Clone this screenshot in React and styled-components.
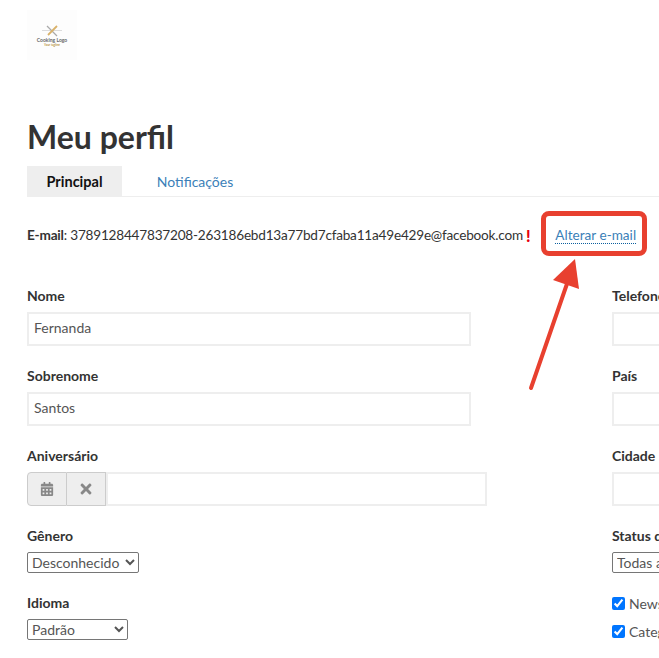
import React from 'react'
import styled, { createGlobalStyle } from 'styled-components'
import { FaCalendarAlt, FaTimes } from 'react-icons/fa'

const GlobalStyle = createGlobalStyle`
  html, body {
    margin: 0;
    padding: 0;
    background: #fff;
    overflow: hidden;
  }
  body {
    font-family: "Lato", "Open Sans", sans-serif;
    color: #333;
  }
`

const Page = styled.div`
  position: relative;
  width: 659px;
  height: 658px;
  overflow: hidden;
  padding: 10px 0 0 27px;
  box-sizing: border-box;
`

const LogoBox = styled.div`
  width: 50px;
  height: 50px;
  background: #fdfdfd;
  display: flex;
  flex-direction: column;
  align-items: center;
  padding-top: 15px;
  box-sizing: border-box;
`

const LogoName = styled.span`
  font-size: 5px;
  line-height: 6px;
  font-weight: 700;
  color: #666;
  white-space: nowrap;
`

const LogoTag = styled.span`
  font-size: 3px;
  line-height: 4px;
  font-weight: 700;
  color: #b8923f;
  white-space: nowrap;
`

const Title = styled.h1`
  margin: 54px 0 0;
  font-size: 32px;
  line-height: 46px;
  font-weight: 700;
  color: #333;
`

const Tabs = styled.div`
  display: flex;
  margin-top: 6px;
  height: 31px;
  width: 700px;
  border-bottom: 1px solid #eee;
  box-sizing: border-box;
`

const Tab = styled.div`
  width: ${p => p.$width}px;
  display: flex;
  align-items: center;
  justify-content: center;
  font-size: ${p => (p.$active ? 14.5 : 14)}px;
  font-weight: ${p => (p.$active ? 700 : 400)};
  color: ${p => (p.$active ? '#111' : '#3b7fb8')};
  background: ${p => (p.$active ? '#eee' : 'transparent')};
`

const EmailRow = styled.div`
  display: flex;
  align-items: center;
  height: 20px;
  margin-top: 28px;
  font-size: 13.6px;
  letter-spacing: -0.21px;
  color: #333;
  white-space: nowrap;
`

const Warn = styled.span`
  color: #e8000b;
  font-weight: 900;
  font-size: 16px;
  margin-left: 3px;
`

const ChangeLink = styled.a`
  margin-left: 25px;
  font-size: 13.6px;
  letter-spacing: 0;
  color: #3b7fb8;
  border-bottom: 1px dotted #0b5f9e;
  line-height: 16px;
`

const FormGrid = styled.div`
  display: grid;
  grid-template-columns: 585px 300px;
  margin-top: 43px;
`

const Column = styled.div`
  display: flex;
  flex-direction: column;
`

const Field = styled.div`
  display: flex;
  flex-direction: column;
  margin-bottom: ${p => p.$gap}px;
`

const Label = styled.label`
  font-size: 14px;
  line-height: 16px;
  font-weight: 700;
  color: #333;
  margin-bottom: 8px;
`

const TextInput = styled.input`
  width: ${p => p.$width}px;
  height: 34px;
  box-sizing: border-box;
  border: 2px solid #eee;
  padding: 0 5px 4px;
  font-family: inherit;
  font-size: 14px;
  color: #555;
  outline: none;
`

const DateGroup = styled.div`
  display: flex;
  width: 460px;
  height: 34px;
`

const DateButton = styled.button`
  width: ${p => p.$width}px;
  flex: none;
  display: flex;
  align-items: center;
  justify-content: center;
  padding: 0;
  background: #eee;
  color: #888;
  font-size: ${p => p.$icon}px;
  border: 1px solid #ccc;
  border-left-width: ${p => (p.$first ? 1 : 0)}px;
  border-radius: ${p => (p.$first ? '4px 0 0 4px' : '0')};
`

const DateInput = styled.input`
  flex: 1;
  min-width: 0;
  box-sizing: border-box;
  border: 2px solid #eee;
  outline: none;
`

const Select = styled.select`
  width: ${p => p.$width}px;
  height: 21px;
  box-sizing: border-box;
  font-family: inherit;
  font-size: 14px;
  color: #555;
  background: #fff;
  border: 1px solid #767676;
  border-radius: 2px;
  padding: 0 0 2px;
`

const CheckRow = styled.label`
  display: flex;
  align-items: center;
  gap: 4px;
  height: 16px;
  margin-bottom: 12px;
  font-size: 14px;
  color: #555;
  white-space: nowrap;
`

const Check = styled.input`
  width: 13px;
  height: 13px;
  margin: 0;
`

const Highlight = styled.div`
  position: absolute;
  left: 541px;
  top: 211px;
  width: 106px;
  height: 45px;
  box-sizing: border-box;
  border: 5px solid #e8402f;
  border-radius: 8px;
`

const Arrow = styled.svg`
  position: absolute;
  left: 520px;
  top: 250px;
`

function Logo() {
  return (
    <LogoBox>
      <svg width="22" height="12" viewBox="0 0 22 12">
        <path d="M1 5.5h20" stroke="#bbb" strokeWidth="0.5" />
        <path d="M6 1l10 10" stroke="#aaa" strokeWidth="1.3" />
        <path d="M16 1L7 10" stroke="#d9b26a" strokeWidth="1.8" />
      </svg>
      <LogoName>Cooking Logo</LogoName>
      <LogoTag>Your tagline</LogoTag>
    </LogoBox>
  )
}

export default function App() {
  return (
    <Page>
      <GlobalStyle />
      <Logo />
      <Title>Meu perfil</Title>
      <Tabs>
        <Tab $active $width={95}>Principal</Tab>
        <Tab $width={146}>Notificações</Tab>
      </Tabs>
      <EmailRow>
        <b>E-mail</b>: 3789128447837208-263186ebd13a77bd7cfaba11a49e429e@facebook.com
        <Warn>!</Warn>
        <ChangeLink>Alterar e-mail</ChangeLink>
      </EmailRow>
      <FormGrid>
        <Column>
          <Field $gap={22}>
            <Label>Nome</Label>
            <TextInput $width={444} defaultValue="Fernanda" />
          </Field>
          <Field $gap={22}>
            <Label>Sobrenome</Label>
            <TextInput $width={444} defaultValue="Santos" />
          </Field>
          <Field $gap={22}>
            <Label>Aniversário</Label>
            <DateGroup>
              <DateButton $first $width={40} $icon={14}><FaCalendarAlt /></DateButton>
              <DateButton $width={39} $icon={16}><FaTimes /></DateButton>
              <DateInput />
            </DateGroup>
          </Field>
          <Field $gap={22}>
            <Label>Gênero</Label>
            <Select $width={112} defaultValue="Desconhecido">
              <option>Desconhecido</option>
            </Select>
          </Field>
          <Field $gap={0}>
            <Label>Idioma</Label>
            <Select $width={101} defaultValue="Padrão">
              <option>Padrão</option>
            </Select>
          </Field>
        </Column>
        <Column>
          <Field $gap={22}>
            <Label>Telefone</Label>
            <TextInput $width={280} />
          </Field>
          <Field $gap={22}>
            <Label>País</Label>
            <TextInput $width={280} />
          </Field>
          <Field $gap={22}>
            <Label>Cidade</Label>
            <TextInput $width={280} />
          </Field>
          <Field $gap={22}>
            <Label>Status do pedido</Label>
            <Select $width={200} defaultValue="Todas as lojas">
              <option>Todas as lojas</option>
            </Select>
          </Field>
          <CheckRow><Check type="checkbox" defaultChecked />Newsletter</CheckRow>
          <CheckRow><Check type="checkbox" defaultChecked />Categorias</CheckRow>
        </Column>
      </FormGrid>
      <Highlight />
      <Arrow width="70" height="145" viewBox="0 0 70 145">
        <path d="M11 138L49 28" stroke="#e8402f" strokeWidth="4" strokeLinecap="round" fill="none" />
        <path d="M55 9L33 30L59 39Z" fill="#e8402f" />
      </Arrow>
    </Page>
  )
}
